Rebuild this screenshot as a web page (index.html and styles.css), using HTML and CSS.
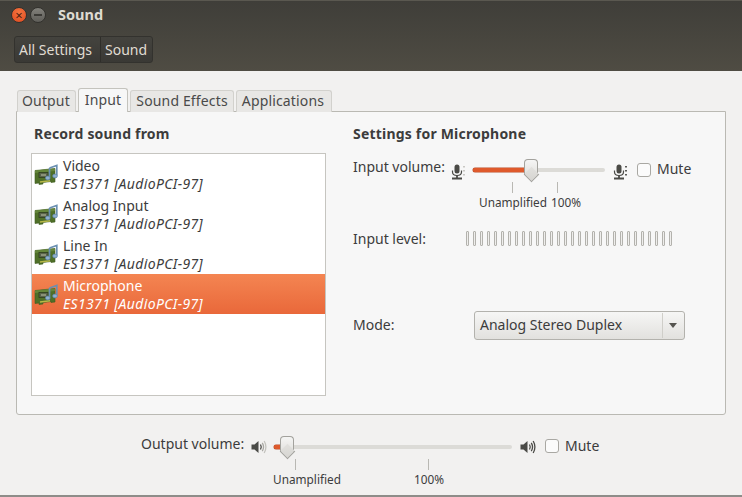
FILE: index.html
```html
<!DOCTYPE html>
<html>

<head>
    <meta charset="utf-8">
    <title>Sound</title>
    <link rel="stylesheet" href="styles.css">
</head>

<body>
    <svg class="defs" width="0" height="0">
        <symbol id="card" viewBox="0 0 24 24">
            <path d="M1 7.5 L21 5.5 L21 19 L17 19.5 L17 18.5 L9 19.5 L9 21 L5 21.5 L5 20 L1 20.5 Z" fill="#4f6f28" stroke="#3c5a1e" stroke-width=".6"/>
            <path d="M1 7.5 L21 5.5 L21 8 L1 10 Z" fill="#64853a"/>
            <rect x="5" y="9.5" width="9" height="5" fill="#59634a" stroke="#2f3f1c" stroke-width=".8"/>
            <rect x="7" y="11" width="5" height="2" fill="#8a9278"/>
            <path d="M6 19 L16 17.8" stroke="#b8b848" stroke-width="1.4"/>
            <path d="M15.5 5 L22.8 2.4 L22.8 12.5" fill="none" stroke="#6a8fb0" stroke-width="1.7"/>
            <path d="M15.5 5 L15.5 14.5" fill="none" stroke="#6a8fb0" stroke-width="1.7"/>
            <ellipse cx="13.8" cy="15" rx="2.4" ry="1.9" fill="#8fb0cd" stroke="#5a83a8" stroke-width=".7"/>
            <ellipse cx="21" cy="13" rx="2.4" ry="1.9" fill="#8fb0cd" stroke="#5a83a8" stroke-width=".7"/>
        </symbol>
        <symbol id="mic-low" viewBox="0 0 15 16">
            <rect x="3.5" y="0.5" width="5" height="9" rx="2.5" fill="#4a4a46"/>
            <path d="M1.5 6.5 V8 Q1.5 11.5 6 11.5 Q10.5 11.5 10.5 8 V6.5" fill="none" stroke="#4a4a46" stroke-width="1.2"/>
            <path d="M6 11.5 V13.5 M1 14.5 H11" stroke="#4a4a46" stroke-width="1.8"/>
            <path d="M13 2 V3.5 M13 6 V7.5 M13 10 V11.5" stroke="#c4c3be" stroke-width="1.8"/>
        </symbol>
        <symbol id="mic-high" viewBox="0 0 15 16">
            <rect x="3.5" y="0.5" width="5" height="9" rx="2.5" fill="#4a4a46"/>
            <path d="M1.5 6.5 V8 Q1.5 11.5 6 11.5 Q10.5 11.5 10.5 8 V6.5" fill="none" stroke="#4a4a46" stroke-width="1.2"/>
            <path d="M6 11.5 V13.5 M1 14.5 H11" stroke="#4a4a46" stroke-width="1.8"/>
            <path d="M13 2 V3.5 M13 6 V7.5 M13 10 V11.5" stroke="#4a4a46" stroke-width="1.8"/>
        </symbol>
        <symbol id="speaker" viewBox="0 0 16 16">
            <path d="M0.5 5.5 H3.5 L7.5 2 V14 L3.5 10.5 H0.5 Z" fill="#4a4a46"/>
            <path d="M9.5 5.5 Q11 8 9.5 10.5" fill="none" stroke="#4a4a46" stroke-width="1.3"/>
            <path d="M11.3 3.8 Q13.8 8 11.3 12.2" fill="none" stroke="#4a4a46" stroke-width="1.3"/>
            <path d="M13.2 2 Q16.6 8 13.2 14" fill="none" stroke="#4a4a46" stroke-width="1.3"/>
        </symbol>
        <symbol id="speaker-low" viewBox="0 0 16 16">
            <path d="M0.5 5.5 H3.5 L7.5 2 V14 L3.5 10.5 H0.5 Z" fill="#4a4a46"/>
            <path d="M9.5 5.5 Q11 8 9.5 10.5" fill="none" stroke="#4a4a46" stroke-width="1.3"/>
            <path d="M11.3 3.8 Q13.8 8 11.3 12.2" fill="none" stroke="#a9a8a3" stroke-width="1.3"/>
            <path d="M13.2 2 Q16.6 8 13.2 14" fill="none" stroke="#c4c3be" stroke-width="1.3"/>
        </symbol>
    </svg>

    <div class="window">
        <header class="chrome">
            <div class="titlebar">
                <span class="wm-btn wm-close">&#215;</span>
                <span class="wm-btn wm-min"></span>
                <span class="wm-title">Sound</span>
            </div>
            <div class="crumbs">
                <span class="crumb crumb-first">All Settings</span>
                <span class="crumb">Sound</span>
            </div>
        </header>

        <main class="content">
            <div class="tabs">
                <span class="tab tab-first">Output</span>
                <span class="tab tab-active">Input</span>
                <span class="tab">Sound Effects</span>
                <span class="tab tab-last">Applications</span>
            </div>

            <section class="panel">
                <div class="col-left">
                    <h2 class="heading heading-left">Record sound from</h2>
                    <div class="devices">
                        <div class="device">
                            <svg class="device-icon"><use href="#card"/></svg>
                            <div class="device-text"><div>Video</div><em>ES1371 [AudioPCI-97]</em></div>
                        </div>
                        <div class="device">
                            <svg class="device-icon"><use href="#card"/></svg>
                            <div class="device-text"><div>Analog Input</div><em>ES1371 [AudioPCI-97]</em></div>
                        </div>
                        <div class="device">
                            <svg class="device-icon"><use href="#card"/></svg>
                            <div class="device-text"><div>Line In</div><em>ES1371 [AudioPCI-97]</em></div>
                        </div>
                        <div class="device device-selected">
                            <svg class="device-icon"><use href="#card"/></svg>
                            <div class="device-text"><div>Microphone</div><em>ES1371 [AudioPCI-97]</em></div>
                        </div>
                    </div>
                </div>

                <div class="col-right">
                    <h2 class="heading">Settings for Microphone</h2>

                    <div class="volume-row">
                        <span class="label label-input">Input volume:</span>
                        <svg class="mic-icon"><use href="#mic-low"/></svg>
                        <div class="scale scale-input">
                            <div class="track"><div class="track-fill fill-input"></div></div>
                            <div class="thumb thumb-input"></div>
                            <i class="tick tick-a"></i>
                            <i class="tick tick-b"></i>
                            <span class="mark mark-a">Unamplified</span>
                            <span class="mark mark-b">100%</span>
                        </div>
                        <svg class="mic-icon"><use href="#mic-high"/></svg>
                        <span class="check"></span>
                        <span class="label label-mute">Mute</span>
                    </div>

                    <div class="level-row">
                        <span class="label label-input">Input level:</span>
                        <div class="level-bars" id="bars"></div>
                    </div>

                    <div class="mode-row">
                        <span class="label label-input label-mode">Mode:</span>
                        <div class="combo">
                            <span class="combo-text">Analog Stereo Duplex</span>
                            <span class="combo-arrow"></span>
                        </div>
                    </div>
                </div>
            </section>

            <footer class="output">
                <span class="label label-output">Output volume:</span>
                <svg class="speaker-icon speaker-left"><use href="#speaker-low"/></svg>
                <div class="scale scale-output">
                    <div class="track"><div class="track-fill fill-output"></div></div>
                    <div class="thumb thumb-output"></div>
                    <i class="tick tick-c"></i>
                    <i class="tick tick-d"></i>
                    <span class="mark mark-c">Unamplified</span>
                    <span class="mark mark-d">100%</span>
                </div>
                <svg class="speaker-icon"><use href="#speaker"/></svg>
                <span class="check"></span>
                <span class="label label-mute">Mute</span>
            </footer>
        </main>
    </div>

    <script>
        // input level meter, 30 empty bars
        const bars = document.getElementById('bars');
        for (let i = 0; i < 30; i++) {
            bars.appendChild(document.createElement('i'));
        }
    </script>
</body>

</html>
```

FILE: styles.css
```css
* {
    box-sizing: border-box;
}

html, body {
    margin: 0;
    height: 100%;
}

body {
    font-family: "Noto Sans", sans-serif;
    font-size: 14px;
    color: #3c3c3c;
    background-color: #f2f1f0;
    overflow: hidden;
}

.defs {
    position: absolute;
}

.window {
    display: flex;
    flex-direction: column;
    height: 497px;
    border-bottom: 2px solid #8e8d89;
}

/* dark top part */
.chrome {
    height: 71px;
    background: linear-gradient(#3f3e39, #4f4c43);
    border-top: 1px solid #5a5850;
}

.titlebar {
    display: flex;
    align-items: center;
    height: 28px;
    padding-left: 11px;
}

.wm-btn {
    display: flex;
    align-items: center;
    justify-content: center;
    width: 16px;
    height: 16px;
    margin-right: 3px;
    border-radius: 50%;
    border: 1px solid #33322e;
    font-size: 13px;
    line-height: 1;
    color: #4a2010;
}

.wm-close {
    background: radial-gradient(circle at 50% 30%, #f5743f, #dd4a20);
}

.wm-min {
    background: linear-gradient(#82817b, #5f5e59);
}

.wm-min::before {
    content: "";
    width: 8px;
    height: 2px;
    background-color: #3b3a36;
}

.wm-title {
    margin: 0 0 2px 9px;
    font-weight: bold;
    font-size: 14.5px;
    color: #dfdbd2;
}

.crumbs {
    display: inline-flex;
    height: 27px;
    margin: 7px 0 0 14px;
    border: 1px solid #33322e;
    border-radius: 3px;
    background: linear-gradient(#44433e, #3a3935);
}

.crumb {
    display: flex;
    align-items: center;
    padding: 0 5px 0 4px;
    color: #e0dcd3;
}

.crumb-first {
    width: 85px;
}

.crumb + .crumb {
    border-left: 1px solid #2f2e2a;
}

.content {
    flex: 1;
    display: flex;
    flex-direction: column;
    padding: 17px 16px 0;
}

.tabs {
    display: flex;
    gap: 2px;
    padding-left: 1px;
    height: 23px;
    position: relative;
    z-index: 1;
}

.tab {
    padding: 0 5px;
    margin-top: 2px;
    height: 22px;
    background-color: #e8e7e5;
    border: 1px solid #d2d1cd;
    border-bottom: none;
    border-radius: 3px 3px 0 0;
    color: #4a4a4a;
    letter-spacing: .15px;
}

.tab-first {
    padding-left: 4px;
}

.tab-last {
    padding-right: 7px;
}

.tab-active {
    margin-top: 0;
    height: 24px;
    padding: 1px 6px 0;
    background-color: #f7f7f7;
    border-color: #c4c3bd;
}

.panel {
    display: flex;
    gap: 27px;
    height: 304px;
    padding: 13px 0 0 14px;
    background-color: #f7f7f7;
    border: 1px solid #bab9b3;
    border-radius: 0 0 3px 3px;
}

.col-left {
    width: 295px;
}

.heading {
    margin: 0;
    font-size: 14px;
    font-weight: bold;
    line-height: 18px;
    letter-spacing: .2px;
}

.heading-left {
    margin-left: 3px;
}

.devices {
    height: 243px;
    margin-top: 10px;
    background-color: #fff;
    border: 1px solid #c6c5c0;
}

.device {
    display: flex;
    height: 40px;
}

.device-icon {
    flex: none;
    width: 24px;
    height: 24px;
    margin: 9px 5px 0 2px;
}

.device-text {
    padding-top: 3px;
    line-height: 18px;
}

.device-text em {
    letter-spacing: .35px;
}

.device-selected {
    background: linear-gradient(#f48552, #e9683a);
    color: #fff;
}

.col-right {
    flex: 1;
}

.label {
    white-space: nowrap;
}

.label-input {
    width: 98px;
    flex: none;
}

.label-mute {
    margin-top: 2px;
}

.label-mode {
    padding-bottom: 2px;
}

.volume-row {
    display: flex;
    align-items: flex-start;
    height: 72px;
    margin-top: 10px;
    padding-top: 5px;
}

.volume-row .label {
    line-height: 18px;
}

.mic-icon {
    width: 15px;
    height: 16px;
    margin-top: 6px;
}

.scale {
    position: relative;
    height: 50px;
}

.scale-input {
    width: 132px;
    margin: 4px 8px 0 7px;
}

.track {
    position: absolute;
    top: 6px;
    left: 0;
    right: 0;
    height: 4px;
    border-radius: 2px;
    background-color: #dcdbd7;
}

.track-fill {
    height: 4px;
    border-radius: 2px;
    background-color: #df5a2c;
    box-shadow: 0 0 0 .5px #b9502c;
}

.fill-input {
    width: 58px;
}

.fill-output {
    width: 13px;
}

.thumb {
    position: absolute;
    top: -3px;
    width: 14px;
    height: 16px;
    background: linear-gradient(#f5f5f4, #e2e1de);
    border: 1px solid #a3a29d;
    border-bottom: none;
    border-radius: 4px 4px 0 0;
}

/* pointed end of the slider handle */
.thumb::after {
    content: "";
    position: absolute;
    left: 1px;
    bottom: -5px;
    width: 10px;
    height: 10px;
    background: linear-gradient(135deg, #e2e1de, #d6d5d1);
    border-right: 1px solid #a3a29d;
    border-bottom: 1px solid #a3a29d;
    transform: rotate(45deg);
}

.thumb-input {
    left: 51px;
}

.thumb-output {
    left: 6px;
}

.tick {
    position: absolute;
    top: 20px;
    width: 1px;
    height: 11px;
    background-color: #b9b8b3;
}

.tick-a { left: 39px; }
.tick-b { left: 84px; }
.tick-c { left: 21px; }
.tick-d { left: 154px; }

.mark {
    position: absolute;
    top: 32px;
    font-size: 11.8px;
    line-height: 16px;
    white-space: nowrap;
    transform: translateX(-50%);
}

.mark-a { left: 40px; }
.mark-b { left: 93px; }
.mark-c { left: 33px; }
.mark-d { left: 155px; }

.check {
    flex: none;
    width: 14px;
    height: 14px;
    margin: 5px 6px 0 9px;
    border: 1px solid #a9a8a3;
    border-radius: 3px;
    background-color: #fbfbfb;
}

.level-row {
    display: flex;
    align-items: center;
    height: 20px;
    margin-top: 3px;
}

.level-bars {
    display: flex;
    gap: 4px;
    margin-left: 15px;
}

.level-bars i {
    width: 3px;
    height: 15px;
    border: 1px solid #b3b2ad;
    border-radius: 1px;
    background-color: #efeeec;
}

.mode-row {
    display: flex;
    align-items: center;
    height: 30px;
    margin-top: 62px;
}

.combo {
    display: flex;
    align-items: center;
    justify-content: space-between;
    width: 211px;
    height: 29px;
    margin-left: 23px;
    padding-left: 5px;
    border: 1px solid #b3b2ad;
    border-radius: 3px;
    background: linear-gradient(#f6f6f5, #e2e1de);
}

.combo-text {
    padding-bottom: 2px;
}

.combo-arrow {
    position: relative;
    width: 22px;
    height: 25px;
    border-left: 1px solid #cfcec9;
}

.combo-arrow::after {
    content: "";
    position: absolute;
    top: 10px;
    left: 6px;
    border-left: 4px solid transparent;
    border-right: 4px solid transparent;
    border-top: 5px solid #55544f;
}

.output {
    display: flex;
    align-items: flex-start;
    padding: 20px 0 0 125px;
}

.output .label {
    line-height: 18px;
}

.label-output {
    width: 104px;
}

.speaker-icon {
    width: 16px;
    height: 16px;
    margin-top: 4px;
}

.speaker-left {
    margin-left: 6px;
}

.scale-output {
    width: 238px;
    margin: 4px 8px 0 7px;
}

.output .check {
    margin-top: 4px;
}
```
